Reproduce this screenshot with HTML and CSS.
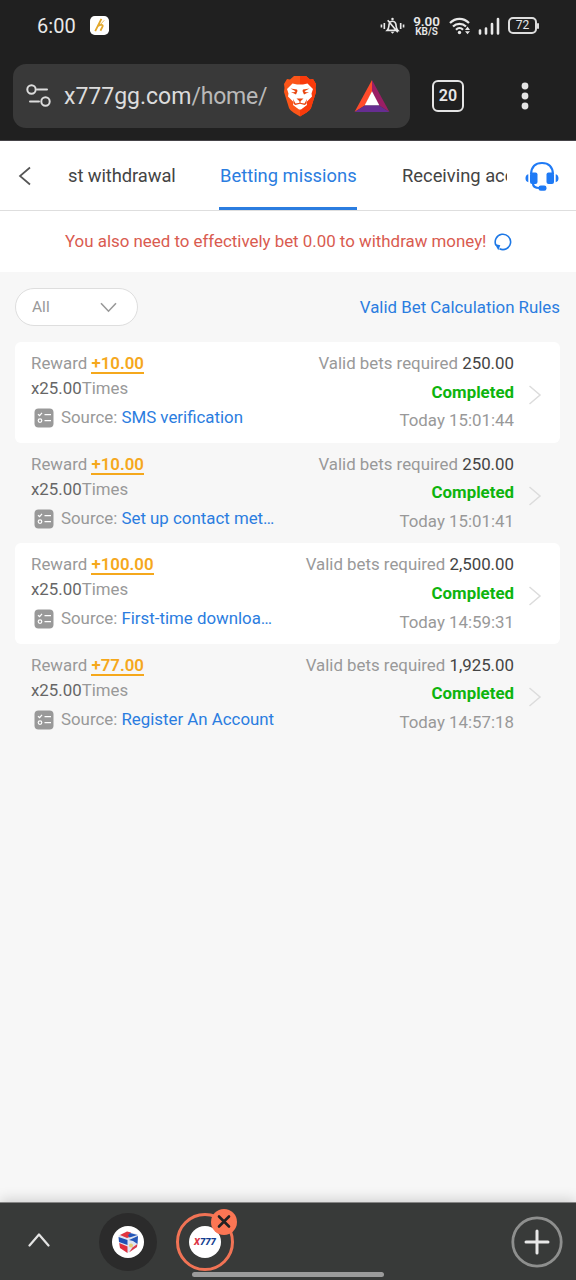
FILE: index.html
```html
<!DOCTYPE html>
<html lang="en">
<head>
<meta charset="utf-8">
<meta name="viewport" content="width=device-width, initial-scale=1">
<title>Betting missions</title>
<link rel="stylesheet" href="styles.css">
</head>
<body>
<svg width="0" height="0" class="defs" aria-hidden="true">
  <symbol id="task" viewBox="0 0 20 20">
    <rect x=".5" y=".5" width="19" height="19" rx="4" fill="#999"/>
    <path d="M4 6.200l1.600 1.500L8 4.800M10.500 6.700H17M10.500 12.600H17" fill="none" stroke="#fff" stroke-width="1.200"/>
    <circle cx="6" cy="12.600" r="1.800" fill="none" stroke="#fff" stroke-width="1.200"/>
  </symbol>
  <symbol id="next" viewBox="0 0 14 22">
    <path d="M1.500 2L12 11 1.500 20" fill="none" stroke="#dcdcdc" stroke-width="1.500"/>
  </symbol>
</svg>
<div class="screen">
  <header class="browser">
    <div class="status">
      <span class="clock">6:00</span>
      <svg class="app-badge" viewBox="0 0 20 20"><rect width="20" height="20" rx="5" fill="#fff"/><path d="M12 3L5.500 16M8.500 10.500c2.500-2 5.500-1.500 4.800.5L11 15.500" fill="none" stroke="#e2a72b" stroke-width="1.900"/><path d="M15 4.500L11 9" stroke="#e8ba50" stroke-width="1"/></svg>
      <svg class="status-bell" viewBox="0 0 26 18"><g fill="none" stroke="#e8e8e8" stroke-width="1.700"><path d="M1.500 7.500v3M4.500 6v6M21.500 6v6M24.500 7.500v3M7.500 13.500c2-2 1.500-4 2-6.500.5-2 1.800-3 3.500-3s3 1 3.500 3c.5 2.500 0 4.500 2 6.500zM8 3l10.500 12.500"/></g><circle cx="13" cy="1.800" r="1.300" fill="#e8e8e8"/><path d="M11 15h4l-2 2z" fill="#e8e8e8"/></svg>
      <div class="speed"><span class="speed-num">9.00</span><span class="speed-unit">KB/S</span></div>
      <svg class="status-wifi" viewBox="0 0 22 18"><g fill="none" stroke="#e8e8e8" stroke-width="2.200"><path d="M1 6c5.500-5.500 13.500-5.500 19 0M4 9.500c3.500-3.500 9.500-3.500 13 0M7 12.700c2-2 5-2 7 0"/></g><circle cx="10.500" cy="15.500" r="1.700" fill="#e8e8e8"/><path d="M16 13l2.500-3.500L21 13zM16 14.200h5l-2.500 3z" fill="#e8e8e8"/></svg>
      <svg class="status-signal" viewBox="0 0 22 18"><path d="M2 16.500v-3M8 16.500v-5M14 16.500V7M20 16.500V2" stroke="#e8e8e8" stroke-width="2.600" stroke-linecap="round"/></svg>
      <div class="battery">72</div>
    </div>
    <div class="toolbar">
      <div class="address">
        <svg class="site-settings" viewBox="0 0 26 24"><g fill="none" stroke="#ddd" stroke-width="2"><circle cx="5.500" cy="5.500" r="4.200"/><path d="M11 5.500h10M4 17.500h9" stroke-linecap="round"/><circle cx="19.500" cy="17.500" r="4.200"/></g></svg>
        <span class="url">x777gg.com<span class="path">/home/</span></span>
        <svg class="lion" viewBox="0 0 36 42"><path d="M12 1h12l4 3.500 3-.5 3 5-.5 4 .5 4-5 16c-1 3-7 6-11 8.500C14 39 8 36 7 33L2 17l.5-4L2 9l3-5 3 .5z" fill="#fb5519"/><path d="M18 1h6l4 3.500 3-.5 3 5-.5 4 .5 4-5 16c-1 3-7 6-11 8.500z" fill="#f93a0b"/><path d="M10.500 8.500L15 9.500h6l4.500-1L31 14l-1.500 4.500.5 3-5.500 5.500.5 3-6 4.500h-2L11 30l.5-3L6 21.500l.5-3L5 14z" fill="#fff"/><path d="M8.500 13.500l6.500 1 .5 1.500-1.500 3.500-5-2.500 3 .2 1.500-1zM27.500 13.500l-6.500 1-.5 1.500 1.500 3.500 5-2.500-3 .2-1.500-1zM14.500 23.500h7L18 26.800zM17.400 26h1.200v2.500h-1.200zM11 24l2.500 4.500L18 27.700l4.500.8L25 24l-.8 5-1.500 1L18 28.800 13.300 30l-1.500-1z" fill="#e9450f"/></svg>
        <svg class="bat" viewBox="0 0 36 33"><path d="M18 0L0 33l11-7 7-14z" fill="#ff4b2b"/><path d="M18 0l18 33-11-7-7-14z" fill="#9b1e65"/><path d="M0 33h36l-11-7H11z" fill="#662d91"/><path d="M18 11.500L25.500 26h-15z" fill="#fff"/></svg>
      </div>
      <div class="tab-count">20</div>
      <svg class="more" viewBox="0 0 8 28"><g fill="#e4e4e4"><circle cx="4" cy="4" r="3.400"/><circle cx="4" cy="14" r="3.400"/><circle cx="4" cy="24" r="3.400"/></g></svg>
    </div>
  </header>

  <nav class="tabs">
    <svg class="back" viewBox="0 0 14 20"><path d="M12 1.500L2 10l10 8.500" fill="none" stroke="#555" stroke-width="1.700"/></svg>
    <div class="tab-strip">
      <span class="tab tab-prev">st withdrawal</span>
      <span class="tab tab-active">Betting missions</span>
      <span class="tab tab-next">Receiving acc</span>
    </div>
    <svg class="headset" viewBox="0 0 34 30"><g fill="#1f7af5"><rect x="5" y="11.500" width="7.500" height="11.500" rx="2"/><rect x="21.500" y="11.500" width="7.500" height="11.500" rx="2"/><path d="M3.300 13.200v8C1 20.500.5 19 .5 17.200s.7-3.500 2.800-4zM30.700 13.200v8c2.300-.7 2.800-2.200 2.800-4s-.7-3.500-2.800-4z"/><rect x="13.500" y="24.500" width="8" height="5.200" rx="2.200"/></g><path d="M6 13C6.500 5.500 11 2 17 2s10.500 3.500 11 11M8 22.500c0 3.500 3 4.500 6.500 4.500" fill="none" stroke="#1f7af5" stroke-width="2.200"/></svg>
  </nav>

  <main>
    <div class="notice">
      <span>You also need to effectively bet 0.00 to withdraw money!</span>
      <svg class="refresh" viewBox="0 0 18 18"><path d="M5.500 15.800A7.700 7.700 0 1 0 2 12.300" fill="none" stroke="#1d78e6" stroke-width="1.600"/><path d="M.8 11l5.500 1.300-2 5z" fill="#1d78e6"/></svg>
    </div>
    <div class="filter-row">
      <div class="select"><span>All</span><svg viewBox="0 0 17 11"><path d="M1 1.200l7.500 8 7.500-8" fill="none" stroke="#999" stroke-width="1.600"/></svg></div>
      <a class="rules">Valid Bet Calculation Rules</a>
    </div>
    <section class="missions">
      <article class="mission">
        <div class="info"><p class="reward">Reward <b>+10.00</b></p><p class="times"><span>x25.00</span>Times</p><p class="source"><svg><use href="#task"/></svg>Source: <a>SMS verification</a></p></div>
        <div class="result"><p>Valid bets required <span class="amount">250.00</span></p><p class="done">Completed</p><p class="date">Today 15:01:44</p></div>
        <svg class="next"><use href="#next"/></svg>
      </article>
      <article class="mission">
        <div class="info"><p class="reward">Reward <b>+10.00</b></p><p class="times"><span>x25.00</span>Times</p><p class="source"><svg><use href="#task"/></svg>Source: <a>Set up contact met…</a></p></div>
        <div class="result"><p>Valid bets required <span class="amount">250.00</span></p><p class="done">Completed</p><p class="date">Today 15:01:41</p></div>
        <svg class="next"><use href="#next"/></svg>
      </article>
      <article class="mission">
        <div class="info"><p class="reward">Reward <b>+100.00</b></p><p class="times"><span>x25.00</span>Times</p><p class="source"><svg><use href="#task"/></svg>Source: <a>First-time downloa…</a></p></div>
        <div class="result"><p>Valid bets required <span class="amount">2,500.00</span></p><p class="done">Completed</p><p class="date">Today 14:59:31</p></div>
        <svg class="next"><use href="#next"/></svg>
      </article>
      <article class="mission">
        <div class="info"><p class="reward">Reward <b>+77.00</b></p><p class="times"><span>x25.00</span>Times</p><p class="source"><svg><use href="#task"/></svg>Source: <a>Register An Account</a></p></div>
        <div class="result"><p>Valid bets required <span class="amount">1,925.00</span></p><p class="done">Completed</p><p class="date">Today 14:57:18</p></div>
        <svg class="next"><use href="#next"/></svg>
      </article>
    </section>
  </main>

  <footer class="tab-group">
    <svg class="expand" viewBox="0 0 22 14"><path d="M1.500 12.500L11 1.500l9.500 11" fill="none" stroke="#e4e4e4" stroke-width="2.200" stroke-linecap="round" stroke-linejoin="round"/></svg>
    <div class="site site-first">
      <svg viewBox="0 0 32 32"><circle cx="16" cy="16" r="16" fill="#fff"/><path d="M6.500 9.500l8.500-4 11 3-1 12.500-9.500 6L8 22z" fill="#dfe4f0"/><path d="M8 9l7-3.500 4 1-2 2.500 2 1.500-4 1.500z" fill="#e2343f"/><path d="M18 7l7.500 2-8 2.500-1.500-2z" fill="#2456b8"/><path d="M6.500 11l9 3v5L7 16z" fill="#1f4fb3"/><path d="M7.200 17l8.300 3.500V27L8 22z" fill="#e02d3c"/><path d="M17 14l9-4-.5 8-4.500-3z" fill="#2456b8"/><path d="M25.400 18l-.4 3-8 5.500 3.500-5z" fill="#d93b4c"/><circle cx="19" cy="19.500" r="2" fill="#e6cf79"/></svg>
    </div>
    <div class="site site-current">
      <div class="site-logo"><span>X</span>777</div>
      <svg class="close" viewBox="0 0 26 26"><circle cx="13" cy="13" r="13" fill="#fb7654"/><path d="M8 7.500l10 10M18 7.500l-10 10" stroke="#222" stroke-width="2.600" stroke-linecap="round"/></svg>
    </div>
    <svg class="add" viewBox="0 0 52 52"><circle cx="26" cy="26" r="24.200" fill="none" stroke="#8e8f8e" stroke-width="2.800"/><path d="M26 15v22M15 26h22" stroke="#e8e8e8" stroke-width="3" stroke-linecap="round"/></svg>
    <div class="gesture"></div>
  </footer>
</div>
</body>
</html>
```
FILE: styles.css
```css
* { box-sizing: border-box; }
body { margin: 0; font-family: Roboto, "Liberation Sans", sans-serif; }
p { margin: 0; }
svg { display: block; flex: none; }
.defs { position: absolute; }

.screen { width: 576px; height: 1280px; display: flex; flex-direction: column; overflow: hidden; background: #f7f7f7; }

.browser { height: 141px; flex: none; background: #202020; color: #e8e8e8; border-bottom: 1px solid #454348; }
.status { height: 51px; padding-left: 37px; display: flex; align-items: center; }
.clock { width: 53px; font-size: 20px; letter-spacing: .1px; }
.app-badge { width: 19px; height: 19px; }
.status-bell { width: 25px; height: 18px; margin-left: 271px; }
.speed { width: 27px; margin-left: 8px; display: flex; flex-direction: column; align-items: center; font-weight: 600; }
.speed-num { font-size: 13.500px; line-height: 12px; letter-spacing: -.1px; }
.speed-unit { font-size: 10px; line-height: 9px; }
.status-wifi { width: 22px; height: 18px; margin-left: 9px; }
.status-signal { width: 22px; height: 18px; margin-left: 7px; }
.battery { position: relative; width: 29px; height: 17px; margin-left: 8px; border: 2px solid #ddd; border-radius: 5px; font-size: 12px; line-height: 13px; text-align: center; }
.battery::after { content: ""; position: absolute; right: -4px; top: 4px; width: 2px; height: 6px; border-radius: 1px; background: #ddd; }

.toolbar { height: 90px; padding: 13px 0 0 13px; display: flex; align-items: flex-start; }
.address { width: 397px; height: 64px; border-radius: 13px; background: #393939; display: flex; align-items: center; padding-left: 13px; }
.site-settings { width: 26px; height: 24px; }
.url { width: 205px; margin-left: 12px; padding-top: 2px; overflow: hidden; white-space: nowrap; font-size: 23px; color: #dcdcdc; line-height: 30px; }
.path { color: #b9b9b9; letter-spacing: -.2px; }
.lion { width: 36px; height: 42px; margin-left: 13px; }
.bat { width: 36px; height: 32px; margin-left: 36px; }
.tab-count { width: 32px; height: 32px; margin: 16px 0 0 22px; border: 2px solid #e4e4e4; border-radius: 6px; font-size: 16px; font-weight: 600; line-height: 28px; text-align: center; }
.more { width: 8px; height: 28px; margin: 18px 0 0 57px; }

.tabs { height: 70px; flex: none; display: flex; align-items: center; background: #fff; border-bottom: 1px solid #dedede; }
.back { width: 14px; height: 20px; margin-left: 18px; }
.tab-strip { width: 439px; height: 70px; margin-left: 36px; overflow: hidden; display: flex; white-space: nowrap; font-size: 18.350px; line-height: 69px; color: #444; }
.tab { flex: none; height: 69px; }
.tab-prev { width: 107px; letter-spacing: -.08px; }
.tab-active { width: 138px; margin: 0 45px 0 44px; padding-left: 1px; color: #2b7de0; border-bottom: 3px solid #2b7de0; }
.headset { width: 34px; height: 30px; margin-left: 18px; }

.notice { height: 61px; background: #fff; display: flex; align-items: center; padding-left: 65px; color: #d95b50; font-size: 16.900px; white-space: nowrap; }
.notice span { width: 422px; padding-bottom: 2px; letter-spacing: -.01px; }
.refresh { width: 18px; height: 18px; margin-left: 7px; }
.filter-row { height: 70px; padding: 0 16px 0 15px; display: flex; align-items: center; justify-content: space-between; }
.select { width: 123px; height: 38px; border: 1px solid #dedede; border-radius: 19px; background: #fff; padding: 0 20px 0 16px; display: flex; justify-content: space-between; align-items: center; color: #999; font-size: 15.500px; }
.select svg { width: 17px; height: 11px; }
.rules { color: #2b7de0; font-size: 16.850px; }

.missions { margin: 0 16px 0 15px; }
.mission { height: 100.600px; padding-left: 16px; border-radius: 6px; display: flex; color: #999; font-size: 16.850px; white-space: nowrap; }
.mission:nth-child(odd) { background: #fff; }
.info { width: 250px; flex: none; padding-top: 9px; }
.info p { height: 25px; line-height: 24px; }
.reward b { display: inline-block; height: 23px; line-height: 24px; vertical-align: top; font-weight: 600; color: #f5a81c; border-bottom: 2px solid #f5a81c; }
.times span { color: #666; }
.info .source { display: flex; height: 34px; line-height: 33px; white-space: pre; }
.source svg { width: 20px; height: 20px; margin: 7px 7px 0 3px; }
.source a { color: #2b7de0; }
.result { width: 233px; padding-top: 7px; text-align: right; line-height: 28.700px; }
.amount { color: #444; }
.done { color: #0eb40e; font-weight: 700; }
.next { width: 14px; height: 22px; margin: 42px 0 0 14px; }

.tab-group { position: relative; height: 78px; margin-top: auto; flex: none; display: flex; align-items: center; padding-left: 28px; background: #383a39; border-top: 1px solid #858585; box-shadow: 0 -3px 12px #00000026; }
.expand { width: 22px; height: 14px; margin-top: -3px; }
.site { width: 58px; height: 58px; border-radius: 50%; display: flex; align-items: center; justify-content: center; }
.site-first { margin-left: 49px; background: #2b2b2b; }
.site-first svg { width: 32px; height: 32px; }
.site-current { position: relative; margin-left: 19px; border: 3px solid #f17355; }
.site-logo { width: 32px; height: 32px; border-radius: 50%; background: #fff; font-size: 9.500px; line-height: 32px; font-weight: 900; font-style: italic; color: #153f91; text-align: center; }
.site-logo span { color: #dc3545; }
.close { position: absolute; left: 32px; top: -7px; width: 26px; height: 26px; }
.add { width: 52px; height: 52px; margin-left: 277px; }
.gesture { position: absolute; left: 192px; bottom: 3px; width: 192px; height: 5px; border-radius: 3px; background: #9b9b9b; }
```
